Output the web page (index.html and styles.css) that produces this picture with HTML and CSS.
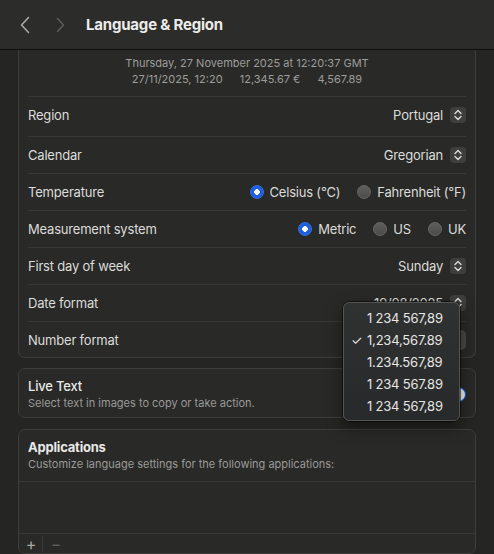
FILE: index.html
```html
<!DOCTYPE html>
<html lang="en">
<head>
    <meta charset="UTF-8">
    <meta name="viewport" content="width=device-width, initial-scale=1.0">
    <title>Language &amp; Region</title>
    <link rel="stylesheet" href="styles.css">
</head>
<body>
    <div class="toolbar">
        <span class="nav-btn">
            <svg width="12" height="18" viewBox="0 0 12 18"><path d="M9.5 1.5 L2.5 9 L9.5 16.5" fill="none" stroke="#a8a8a6" stroke-width="1.6" stroke-linecap="round" stroke-linejoin="round"/></svg>
        </span>
        <span class="nav-btn dim">
            <svg width="12" height="18" viewBox="0 0 12 18"><path d="M2.5 2.5 L8.5 9 L2.5 15.5" fill="none" stroke="#5e5e5c" stroke-width="1.4" stroke-linecap="round" stroke-linejoin="round"/></svg>
        </span>
        <h1>Language &amp; Region</h1>
    </div>

    <div class="content">
        <div class="card clipped">
            <div class="preview">
                <div>Thursday, 27 November 2025 at 12:20:37 GMT</div>
                <div class="preview-values">
                    <span>27/11/2025, 12:20</span>
                    <span>12,345.67 €</span>
                    <span>4,567.89</span>
                </div>
            </div>

            <div class="row tall">
                <span class="label">Region</span>
                <span class="popup">Portugal <span class="stepper"></span></span>
            </div>
            <div class="row">
                <span class="label">Calendar</span>
                <span class="popup">Gregorian <span class="stepper"></span></span>
            </div>
            <div class="row">
                <span class="label">Temperature</span>
                <span class="radios">
                    <span class="radio on">Celsius (°C)</span>
                    <span class="radio">Fahrenheit (°F)</span>
                </span>
            </div>
            <div class="row">
                <span class="label">Measurement system</span>
                <span class="radios">
                    <span class="radio on">Metric</span>
                    <span class="radio">US</span>
                    <span class="radio">UK</span>
                </span>
            </div>
            <div class="row">
                <span class="label">First day of week</span>
                <span class="popup">Sunday <span class="stepper"></span></span>
            </div>
            <div class="row">
                <span class="label">Date format</span>
                <span class="popup">19/08/2025 <span class="stepper"></span></span>
            </div>
            <div class="row last">
                <span class="label">Number format</span>
                <!-- the open menu sits on top of this button -->
                <span class="popup pressed"></span>
            </div>
        </div>

        <div class="card padded">
            <div class="card-head">
                <div>
                    <div class="title">Live Text</div>
                    <div class="subtitle">Select text in images to copy or take action.</div>
                </div>
                <span class="switch"></span>
            </div>
        </div>

        <div class="card apps">
            <div class="apps-head">
                <div class="title bold">Applications</div>
                <div class="subtitle">Customize language settings for the following applications:</div>
            </div>
            <div class="apps-list"></div>
            <div class="apps-bar">
                <span class="bar-btn">+</span>
                <span class="bar-sep"></span>
                <span class="bar-btn minus">−</span>
            </div>
        </div>
    </div>

    <div class="menu">
        <div class="menu-item">1 234 567,89</div>
        <div class="menu-item checked">1,234,567.89</div>
        <div class="menu-item">1.234.567,89</div>
        <div class="menu-item">1 234 567.89</div>
        <div class="menu-item">1 234 567,89</div>
    </div>
</body>
</html>
```

FILE: styles.css
```css
body {
    margin: 0;
    width: 494px;
    height: 554px;
    overflow: hidden;
    background: #252523;
    font-family: Inter, 'Noto Sans', sans-serif;
    font-size: 13px;
    letter-spacing: -0.2px;
    color: #dededc;
    position: relative;
}

.toolbar {
    height: 49px;
    background: #2c2c2a;
    border-bottom: 1px solid #0d0d0c;
    display: flex;
    align-items: center;
    padding-left: 19px;
    box-sizing: content-box;
}

.nav-btn {
    display: flex;
    width: 14px;
    margin-right: 22px;
}

.nav-btn.dim {
    margin-right: 17px;
}

.toolbar h1 {
    margin: 0;
    font-size: 15px;
    font-weight: 700;
    color: #ececea;
    letter-spacing: -0.2px;
}

.content {
    padding: 0 18px;
}

.card {
    background: #292927;
    border: 1px solid #3d3d3b;
    border-radius: 7px;
    margin-bottom: 10px;
}

.card.clipped {
    border-top: none;
    border-top-left-radius: 0;
    border-top-right-radius: 0;
}

.preview {
    height: 41px;
    padding-top: 5px;
    text-align: center;
    font-size: 11px;
    line-height: 16px;
    letter-spacing: 0;
    color: #9d9d9b;
}

.preview-values span {
    margin: 0 7px;
}

.row {
    height: 36px;
    margin: 0 9px;
    border-top: 1px solid #383836;
    display: flex;
    align-items: center;
    justify-content: space-between;
}

.row.tall {
    height: 36px;
    padding-bottom: 3px;
}

.row.last {
    height: 35px;
}

.label {
    color: #dcdcda;
}

.popup {
    display: flex;
    align-items: center;
    gap: 7px;
    color: #dcdcda;
}

.stepper {
    width: 16px;
    height: 16px;
    border-radius: 4px;
    background: #3e3e3c url("data:image/svg+xml,%3Csvg xmlns='http://www.w3.org/2000/svg' width='16' height='16'%3E%3Cpath d='M5 6.5 L8 3.5 L11 6.5 M5 9.5 L8 12.5 L11 9.5' fill='none' stroke='%23dcdcda' stroke-width='1.4' stroke-linecap='round' stroke-linejoin='round'/%3E%3C/svg%3E") no-repeat center;
}

.popup.pressed {
    background: #4a4a48;
    border-radius: 5px;
    width: 118px;
    height: 20px;
}

.radios {
    display: flex;
    gap: 17px;
}

.radio {
    display: flex;
    align-items: center;
    gap: 6px;
    color: #dcdcda;
}

.radio::before {
    content: '';
    width: 14px;
    height: 14px;
    border-radius: 50%;
    box-sizing: border-box;
    background: linear-gradient(#5e5e5c, #4c4c4a);
    border: 0.5px solid #666664;
}

.radio.on::before {
    background: radial-gradient(circle, #fff 0 2.6px, #1f5fdc 3px);
    border-color: #2f6ee8;
}

.card.padded {
    padding: 9px 9px 7px;
    margin-bottom: 11px;
}

.card-head {
    display: flex;
    justify-content: space-between;
    align-items: center;
}

.title {
    line-height: 16px;
    color: #e8e8e6;
    font-weight: 500;
}

.title.bold {
    font-weight: 700;
}

.subtitle {
    margin-top: 2px;
    font-size: 11px;
    line-height: 14px;
    letter-spacing: 0;
    color: #9a9a98;
}

.switch {
    width: 26px;
    height: 15px;
    border-radius: 8px;
    background: #1f5fdc;
    position: relative;
}

.switch::after {
    content: '';
    position: absolute;
    right: 1px;
    top: 1px;
    width: 13px;
    height: 13px;
    border-radius: 50%;
    background: #f0f0f0;
}

.apps-head {
    padding: 9px 9px 10px;
    border-bottom: 1px solid #383836;
}

.apps-list {
    height: 51px;
    border-bottom: 1px solid #383836;
}

.apps-bar {
    height: 19px;
    display: flex;
    align-items: center;
    padding-left: 5px;
}

.bar-btn {
    width: 14px;
    text-align: center;
    font-size: 16px;
    line-height: 14px;
    color: #a8a8a6;
}

.bar-btn.minus {
    color: #60605e;
}

.bar-sep {
    width: 1px;
    height: 16px;
    background: #3c3c3a;
    margin: 0 6px 0 4px;
}

.menu {
    position: absolute;
    left: 343px;
    top: 302px;
    width: 117px;
    box-sizing: border-box;
    padding: 4px 0 3px;
    border: 1px solid #545452;
    border-radius: 6px;
    background: linear-gradient(#303131, #28292a);
    box-shadow: 0 6px 16px rgba(0, 0, 0, 0.5), 0 0 0 0.5px #000;
}

.menu-item {
    height: 22px;
    line-height: 22px;
    padding-left: 23px;
    color: #e6e6e4;
    position: relative;
}

.menu-item.checked::before {
    content: '✓';
    position: absolute;
    left: 7px;
    color: #e6e6e4;
}
```
